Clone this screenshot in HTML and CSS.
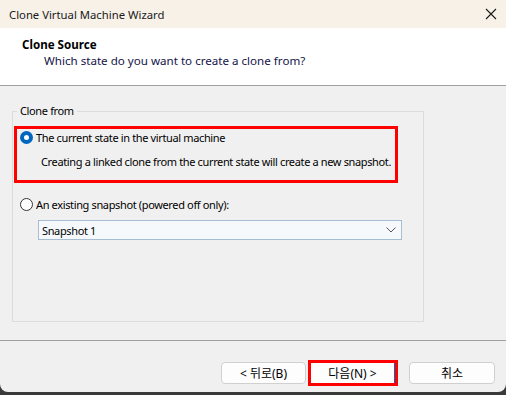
FILE: index.html
```html
<!DOCTYPE html>
<html>
<head>
<meta charset="utf-8">
<link rel="stylesheet" href="styles.css">
</head>
<body>
<div class="window">
  <div class="titlebar">
    <span class="title">Clone Virtual Machine Wizard</span>
    <svg class="close" width="12" height="12" viewBox="0 0 12 12"><path d="M1 1 L11 11 M11 1 L1 11" stroke="#1a1a1a" stroke-width="1.1" fill="none"/></svg>
  </div>
  <div class="header">
    <div class="h-title">Clone Source</div>
    <div class="h-sub">Which state do you want to create a clone from?</div>
  </div>
  <div class="body">
    <fieldset class="group">
      <legend class="legend">Clone from</legend>
      <div class="highlight">
        <div class="option">
          <span class="radio checked"></span>
          <span>The current state in the virtual machine</span>
        </div>
        <div class="desc">Creating a linked clone from the current state will create a new snapshot.</div>
      </div>
      <div class="option opt2">
        <span class="radio"></span>
        <span>An existing snapshot (powered off only):</span>
      </div>
      <div class="select">
        <span>Snapshot 1</span>
        <svg width="10" height="6" viewBox="0 0 10 6"><path d="M0.5 0.5 L5 5 L9.5 0.5" stroke="#555" stroke-width="1" fill="none"/></svg>
      </div>
    </fieldset>
  </div>
  <div class="footer">
    <button class="btn">&lt; 뒤로(B)</button>
    <div class="redbox"><button class="btn inner">다음(N) &gt;</button></div>
    <button class="btn cancel">취소</button>
  </div>
</div>
</body>
</html>
```
FILE: styles.css
```css
html, body {
  margin: 0;
  padding: 0;
  background: #3a3a3a;
  width: 506px;
  height: 395px;
  overflow: hidden;
}
.window {
  width: 506px;
  height: 392px;
  background: #f0f0f0;
  display: flex;
  flex-direction: column;
  border-radius: 0 0 8px 8px;
  overflow: hidden;
  font-family: "Noto Sans", "Noto Sans CJK KR", sans-serif;
  font-size: 11.3px;
  color: #000;
  white-space: nowrap;
}
.titlebar {
  height: 28px;
  background: #f7f1e8;
  display: flex;
  align-items: center;
  justify-content: space-between;
  padding: 0 9px 0 9px;
  flex: none;
}
.title {
  font-size: 11.3px;
  color: #1a1a1a;
}
.header {
  height: 58px;
  background: #fff;
  border-bottom: 1px solid #a0a0a0;
  box-sizing: border-box;
  padding: 9px 0 0 22px;
  flex: none;
  font-size: 11.6px;
}
.h-title {
  font-weight: bold;
  line-height: 16px;
}
.h-sub {
  padding-left: 22px;
  line-height: 15px;
  color: #14144a;
}
.body {
  flex: 1;
  padding: 18px 0 0 12px;
  font-size: 11px;
  letter-spacing: -0.36px;
}
.group {
  margin: 0;
  width: 412px;
  height: 218px;
  box-sizing: border-box;
  border: 1px solid #dcdcdc;
  padding: 0;
}
.legend {
  margin-left: 4px;
  padding: 0 3px;
  line-height: 14px;
}
.highlight {
  margin: 8px 0 0 1px;
  width: 384px;
  height: 57px;
  box-sizing: border-box;
  border: 3px solid #ff0000;
  padding: 0 0 0 3px;
}
.option {
  display: flex;
  align-items: center;
  gap: 3px;
  height: 16px;
}
.radio {
  width: 13px;
  height: 13px;
  box-sizing: border-box;
  border-radius: 50%;
  border: 1px solid #333;
  background: #fff;
  flex: none;
}
.radio.checked {
  border: 4px solid #0067c0;
  background: #fff;
}
.desc {
  margin: 9px 0 0 21px;
  line-height: 15px;
}
.opt2 {
  margin: 13px 0 0 7px;
}
.select {
  margin: 8px 0 0 25px;
  width: 364px;
  height: 20px;
  box-sizing: border-box;
  border: 1px solid #a7bdd3;
  background: #f5f9fc;
  display: flex;
  align-items: center;
  justify-content: space-between;
  padding: 0 5px 0 3px;
}
.footer {
  height: 52px;
  border-top: 1px solid #a0a0a0;
  box-sizing: border-box;
  flex: none;
  display: flex;
  justify-content: flex-end;
  align-items: center;
  padding: 12px 11px 0 0;
}
.btn {
  font-family: "Noto Sans", "Noto Sans CJK KR", sans-serif;
  font-size: 12px;
  width: 85px;
  height: 22px;
  box-sizing: border-box;
  background: #fdfdfd;
  border: 1px solid #d0d0d0;
  border-radius: 4px;
  padding: 0;
  color: #000;
}
.redbox {
  margin-left: 2px;
  width: 90px;
  height: 26px;
  box-sizing: border-box;
  border: 3px solid #ff0000;
  display: flex;
}
.btn.inner {
  width: 84px;
  height: 20px;
  border-radius: 0;
  border: none;
  border-right: 1px solid #0067c0;
  background: #fdfdfd;
}
.cancel {
  margin-left: 11px;
  width: 86px;
}
```
